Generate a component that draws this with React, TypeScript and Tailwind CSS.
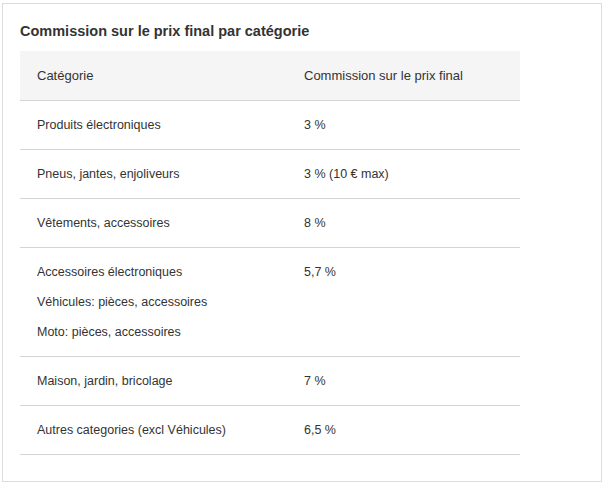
import React from 'react';

const rows: { cat: string[]; rate: string }[] = [
  { cat: ['Produits électroniques'], rate: '3 %' },
  { cat: ['Pneus, jantes, enjoliveurs'], rate: '3 % (10 € max)' },
  { cat: ['Vêtements, accessoires'], rate: '8 %' },
  {
    cat: ['Accessoires électroniques', 'Véhicules: pièces, accessoires', 'Moto: pièces, accessoires'],
    rate: '5,7 %',
  },
  { cat: ['Maison, jardin, bricolage'], rate: '7 %' },
  { cat: ['Autres categories (excl Véhicules)'], rate: '6,5 %' },
];

const App: React.FC = () => {
  return (
    <div className="min-h-screen bg-white pt-[3px] pl-[2px] font-['Liberation_Sans',Arial,sans-serif] text-[#333]">
      <div className="w-[600px] h-[479px] border border-[#dcdcdc] pl-[17px] pt-[17px]">
        <h2 className="text-[14.5px] leading-[20px] font-bold text-[#333]">Commission sur le prix final par catégorie</h2>

        {/* Table */}
        <div className="mt-[10px] w-[500px] text-[12.5px] leading-[15px]">
          <div className="flex bg-[#f5f5f5] border-b border-[#d4d4d4] text-[13px]">
            <div className="w-[267px] pl-[17px] pt-[17px] pb-[17px]">Catégorie</div>
            <div className="flex-1 pl-[17px] pt-[17px] pb-[17px]">Commission sur le prix final</div>
          </div>
          {rows.map((r, i) => (
            <div key={i} className="flex border-b border-[#d4d4d4]">
              <div className="w-[267px] pl-[17px] pt-[17px] pb-[16px] flex flex-col gap-[15px]">
                {r.cat.map((c) => (
                  <span key={c}>{c}</span>
                ))}
              </div>
              <div className="flex-1 pl-[17px] pt-[17px] pb-[16px]">{r.rate}</div>
            </div>
          ))}
        </div>
      </div>
    </div>
  );
};

export default App;
